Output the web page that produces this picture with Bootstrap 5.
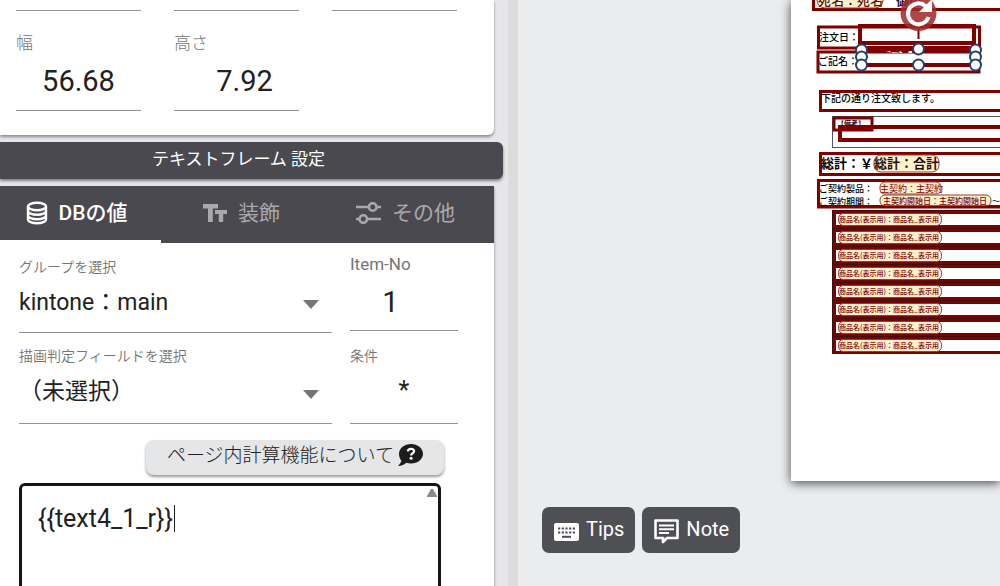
<!DOCTYPE html>
<html lang="ja">
<head>
<meta charset="utf-8">
<meta name="viewport" content="width=device-width, initial-scale=1">
<title>テキストフレーム 設定</title>
<link rel="stylesheet" href="https://cdn.jsdelivr.net/npm/bootstrap@5.3.0/dist/css/bootstrap.min.css">
<style>
  body { font-family: Roboto, "Noto Sans CJK JP", sans-serif; color: #212121; background: #ebecee; overflow: hidden; }
  .workspace { display: grid; grid-template-columns: minmax(0, 508fr) 10px minmax(0, 482fr); height: 100vh; overflow: hidden; }
  .side { background: #e5e7ea; min-width: 0; }
  .splitter { background: #dcdcdc; }
  .panel { background: #fff; margin-right: 14px; box-shadow: 0 2px 3px rgba(0,0,0,.4); }
  .size-panel { border-radius: 0 0 6px 0; padding: 0 37px 24px 16px; height: 135px; }
  .size-grid { display: grid; grid-template-columns: repeat(3, minmax(0, 1fr)); column-gap: 33px; }
  .line-input, .line-select { display: block; width: 100%; border: 0; border-bottom: 1px solid #949494; border-radius: 0; background: transparent; color: #212121; outline: 0; padding: 0; }
  .cut { height: 11px; }
  .size-label { font-size: 17px; line-height: 24px; color: #757575; font-weight: 300; margin-top: 20px; display: block; }
  .size-input { font-size: 29px; height: 56px; text-align: center; padding-bottom: 3px; }
  .size-input.tall { padding-left: 16px; }
  .frame-title { margin: 7px 5px 7px 0; height: 37px; background: #49494f; color: #fff; font-size: 17px; line-height: 35px; font-weight: 400; text-align: center; padding-right: 26px; border-radius: 0 6px 6px 0; box-shadow: 0 2px 3px rgba(0,0,0,.45); }
  .tab-strip { background: #49494f; height: 57px; display: grid; grid-template-columns: 161fr 165fr 168fr; }
  .tab-item { border: 0; border-bottom: 3px solid transparent; background: none; color: #a9a9ad; font-size: 21px; display: flex; align-items: center; justify-content: center; gap: 11px; padding: 0 4px 0 0; line-height: 28px; }
  .tab-item.active { color: #fff; border-bottom-color: #fff; font-weight: 500; padding-right: 8px; }
  .tab-item:last-child { padding-right: 9px; }
  .tab-item svg { flex: none; }
  .db-panel { min-height: 400px; }
  .db-grid { display: grid; grid-template-columns: minmax(0, 313fr) minmax(0, 108fr); column-gap: 18px; padding: 0 36px 0 19px; }
  .db-label { display: block; font-size: 14px; line-height: 20px; color: #757575; font-weight: 350; }
  .line-select { appearance: none; font-size: 23px; height: 56px; padding-bottom: 3px; background: url("data:image/svg+xml,%3Csvg xmlns='http://www.w3.org/2000/svg' width='16' height='9'%3E%3Cpath d='M0 0h16l-8 9z' fill='%23757575'/%3E%3C/svg%3E") no-repeat right 13px center; }
  .row-a { padding-top: 14px; height: 90px; }
  .row-b { padding-top: 13px; height: 91px; }
  .row-b .line-select, .row-b .line-input { height: 58px; }
  .row-b .line-select { padding-bottom: 5px; }
  .item-col { padding-top: 11px; }
  .item-col .db-label { font-size: 17px; font-weight: 400; }
  .item-col .line-input { font-size: 29px; text-align: center; height: 57px; padding-right: 27px; }
  .row-b .line-input { font-size: 25px; text-align: center; padding-bottom: 8px; }
  .help-btn { background: #e4e6e8; border: 0; border-radius: 8px; height: 35px; width: 298px; margin: 16px 50px 8px auto; display: flex; align-items: center; justify-content: center; gap: 4px; font-size: 19px; font-weight: 300; line-height: 28px; padding: 0 0 4px; box-shadow: 0 2px 3px rgba(0,0,0,.4); color: #212121; }
  .formula { position: relative; margin: 0 53px 0 19px; }
  .formula textarea { display: block; width: 100%; height: 180px; border: 3px solid #151515; border-radius: 6px; padding: 18px 16px; font-size: 25px; line-height: 30px; resize: none; outline: 0; overflow: hidden; color: #212121; }
  .caret { position: absolute; left: 155px; top: 22px; width: 1px; height: 27px; background: #212121; }
  .scroll-up { position: absolute; right: 4px; top: 6px; }
  .stage { min-width: 0; overflow: hidden; }
  .paper { margin-left: 273px; height: 481px; background: #fff; box-shadow: 0 2px 10px rgba(0,0,0,.7); }
  .paper svg { display: block; width: 100%; height: 100%; font-family: "Noto Sans CJK JP", sans-serif; }
  .tool-btn { background: #4f4f56; color: #fff; border: 0; border-radius: 7px; height: 46px; font-size: 20px; line-height: 24px; display: flex; align-items: center; gap: 7px; padding: 0 11px 2px 12px; }
  .tool-btn svg { margin-top: 5px; }
  .tools { padding: 26px 0 0 24px; gap: 7px; }
  .fr { fill: none; stroke: #800000; stroke-width: 4; }
  .pill { fill: #fff0cf; stroke: #a03a2a; stroke-width: 1; }
  .hd { fill: #fff; stroke: #24406e; stroke-width: 2; }
</style>
</head>
<body>
<main class="workspace">
  <section class="side">
    <div class="panel size-panel">
      <div class="size-grid">
        <input class="line-input cut" aria-label="X">
        <input class="line-input cut" aria-label="Y">
        <input class="line-input cut" aria-label="角度">
        <div><label class="size-label" for="w">幅</label><input id="w" class="line-input size-input" value="56.68"></div>
        <div><label class="size-label" for="h">高さ</label><input id="h" class="line-input size-input tall" value="7.92"></div>
      </div>
    </div>
    <h2 class="frame-title">テキストフレーム 設定</h2>
    <div class="panel db-panel">
      <div class="tab-strip" role="tablist">
        <button class="tab-item active" role="tab" aria-selected="true">
          <svg width="22" height="24" viewBox="0 0 22 24" fill="none" stroke="#fff" stroke-width="2.4"><ellipse cx="11" cy="5.5" rx="9" ry="3.8"/><path d="M2 5.500v13c0 2 4 3.800 9 3.800s9-1.800 9-3.800v-13M2 10c0 2 4 3.800 9 3.800s9-1.800 9-3.800M2 14.500c0 2 4 3.800 9 3.800s9-1.800 9-3.800"/></svg>
          <span>DBの値</span>
        </button>
        <button class="tab-item" role="tab">
          <svg width="24" height="20" viewBox="0 0 24 20" fill="#a9a9ad"><path d="M0 1h15v4.500H9.800V19H5V5.500H0zM12 7h12v4h-3.800v8h-4.400v-8H12z"/></svg>
          <span>装飾</span>
        </button>
        <button class="tab-item" role="tab">
          <svg width="25" height="22" viewBox="0 0 25 22" fill="none" stroke="#a9a9ad" stroke-width="2.600"><path d="M0 5h12.500M21 5h4M0 17h3M11.500 17H25"/><circle cx="16.700" cy="5" r="3.800"/><circle cx="7.300" cy="17" r="3.800"/></svg>
          <span>その他</span>
        </button>
      </div>
      <div class="db-grid">
        <div class="row-a"><label class="db-label" for="grp">グループを選択</label>
          <select id="grp" class="line-select"><option>kintone：main</option></select></div>
        <div class="item-col"><label class="db-label" for="no">Item-No</label>
          <input id="no" class="line-input" value="1"></div>
        <div class="row-b"><label class="db-label" for="fld">描画判定フィールドを選択</label>
          <select id="fld" class="line-select"><option>（未選択）</option></select></div>
        <div class="row-b"><label class="db-label" for="cond">条件</label>
          <input id="cond" class="line-input" value="*"></div>
      </div>
      <button class="help-btn"><span>ページ内計算機能について</span>
        <svg width="25" height="23" viewBox="0 0 25 23"><path d="M13 0c6.600 0 12 4.300 12 9.800s-5.400 9.800-12 9.800c-1.700 0-3.300-.3-4.700-.8C6.500 20.300 3.500 22 0 22c1.500-1.500 3-3.500 3.300-5.300C1.900 14.900 1 12.500 1 9.800 1 4.300 6.400 0 13 0z" fill="#1c1c1c"/><path d="M9.800 7.300c.3-3 6.300-3.200 6.300-.1 0 2.100-3 2-3 4.200" fill="none" stroke="#fff" stroke-width="2.200"/><circle cx="13.100" cy="14.300" r="1.500" fill="#fff"/></svg>
      </button>
      <div class="formula">
        <textarea aria-label="計算式" spellcheck="false">{{text4_1_r}}</textarea>
        <span class="caret"></span>
        <svg class="scroll-up" width="10" height="8"><path d="M4 0h2l4 7v1H0V7z" fill="#8b8b8b"/></svg>
      </div>
    </div>
  </section>
  <div class="splitter"></div>
  <section class="stage">
    <div class="paper">
      <svg role="img" aria-label="帳票プレビュー">
        <!-- addressee -->
        <path class="fr" d="M22.500-10V9.500H900" style="stroke-width:3"/>
        <rect class="pill" x="26" y="-12" width="66" height="20" rx="8"/>
        <text x="27" y="5" font-size="13" font-weight="500" fill="#5a1010">宛名：宛名</text>
        <text x="105" y="5" font-size="13" font-weight="700" fill="#14143c">御中</text>
        <!-- order date / signer -->
        <rect class="fr" x="27.500" y="27" width="161" height="21" style="stroke-width:3"/>
        <rect class="fr" x="27" y="52" width="161" height="20" style="stroke-width:3"/>
        <text x="28" y="41" font-size="10" font-weight="500">注文日：</text>
        <text x="27" y="65" font-size="10" font-weight="500">ご記名：</text>
        <rect class="fr" x="69" y="26" width="114" height="17"/>
        <path d="M70 46h116v7H70zM70 63h116v4H70z" fill="#800000"/>
        <path d="M95 52l4-1 2 2h6l2-2 3 2h5l1-2h3v2z" fill="#fff"/>
        <!-- body text -->
        <rect class="fr" x="29.500" y="91.500" width="900" height="19" style="stroke-width:3"/>
        <text x="30" y="102" font-size="10" font-weight="500">下記の通り注文致します。</text>
        <!-- remarks -->
        <rect x="41.500" y="116.500" width="900" height="31" fill="none" stroke="#555"/>
        <rect class="fr" x="43" y="118" width="38" height="12" style="stroke-width:3"/>
        <text x="46" y="126" font-size="7" font-weight="700" fill="#300">【備考】</text>
        <rect class="fr" x="49" y="127" width="900" height="13"/>
        <path d="M55 127h18c-2 5-14 5-18 0z" fill="#800000"/>
        <!-- total -->
        <rect class="fr" x="29.500" y="153.500" width="900" height="21" style="stroke-width:3"/>
        <rect class="pill" x="83" y="155" width="65" height="17" rx="7"/>
        <text x="30" y="168" font-size="13" font-weight="700">総計：￥</text>
        <text x="83" y="168" font-size="13" font-weight="700" fill="#2a0d0d">総計：合計</text>
        <!-- contract -->
        <rect class="fr" x="27.500" y="180.500" width="900" height="26" style="stroke-width:3"/>
        <rect class="pill" x="89" y="182" width="61" height="12" rx="5"/>
        <rect class="pill" x="89" y="195" width="111" height="11" rx="5"/>
        <text x="28" y="192" font-size="9" font-weight="500">ご契約製品：</text>
        <text x="89" y="192" font-size="9" fill="#800000">主契約：主契約</text>
        <text x="28" y="205" font-size="9" font-weight="500">ご契約期間：</text>
        <text x="92" y="204" font-size="8" font-weight="500" fill="#800000">主契約開始日：主契約開始日</text>
        <text x="201" y="204" font-size="8">～</text>
        <path d="M26 207h900" stroke="#800000" stroke-width="3"/>
        <!-- product rows -->
        <defs><g id="item">
          <path d="M41 0h900v18H41z" fill="#800000"/><path d="M41 .5h900M41.500 0v18" stroke="#3b1010"/>
          <path d="M45 4h900v11H45z" fill="#fff"/>
          <rect class="pill" x="47.500" y="3.500" width="103" height="12" rx="5"/>
        </g></defs>
        <g id="items"></g>
        <!-- selection handles -->
        <path d="M127.500 26v13" stroke="#800000" stroke-width="2"/>
        <circle cx="127.500" cy="13" r="18" fill="#a32a2a" fill-opacity=".87"/>
        <path d="M134.500 6a10.500 10.500 0 1 0 3 11" fill="none" stroke="#fff" stroke-width="4"/><path d="M141-1v13h-13z" fill="#fff"/>
        <g class="hd"><circle cx="70.500" cy="50" r="5.500"/><circle cx="127.500" cy="49" r="5.500"/><circle cx="184.500" cy="50" r="5.500"/><circle cx="70.500" cy="57" r="5.500"/><circle cx="184.500" cy="57" r="5.500"/><circle cx="70.500" cy="65" r="5.500"/><circle cx="127.500" cy="65" r="5.500"/><circle cx="184.500" cy="65" r="5.500"/></g>
      </svg>
    </div>
    <div class="tools d-flex">
      <button class="tool-btn"><svg width="25" height="18" viewBox="0 0 25 18"><rect width="25" height="18" rx="2" fill="#fff"/><path d="M4 5.500h17M4 9.500h17" stroke="#4f4f56" stroke-width="2.200" stroke-dasharray="2.200 1.500"/><path d="M8 13.800h9" stroke="#4f4f56" stroke-width="2"/></svg><span>Tips</span></button>
      <button class="tool-btn"><svg width="25" height="25" viewBox="0 0 25 25" fill="none" stroke="#fff" stroke-width="2.600"><path d="M1.500 1.500h22v17.500H13l-4 4v-4H1.500z" stroke-linejoin="round"/><path d="M5 6.500h15M5 10.300h15M5 14h10" stroke-width="2"/></svg><span>Note</span></button>
    </div>
  </section>
</main>
<script>
  // Eight identical product lines, 18px apart
  document.getElementById('items').innerHTML = Array.from({ length: 8 }, (_, i) =>
    `<g transform="translate(0 ${210 + i * 18})"><use href="#item"/><text x="48" y="12" font-size="7" font-weight="500" fill="#800000">商品名(表示用)：商品名_表示用</text></g>`).join('');
</script>
<script src="https://cdn.jsdelivr.net/npm/bootstrap@5.3.0/dist/js/bootstrap.bundle.min.js"></script>
</body>
</html>
